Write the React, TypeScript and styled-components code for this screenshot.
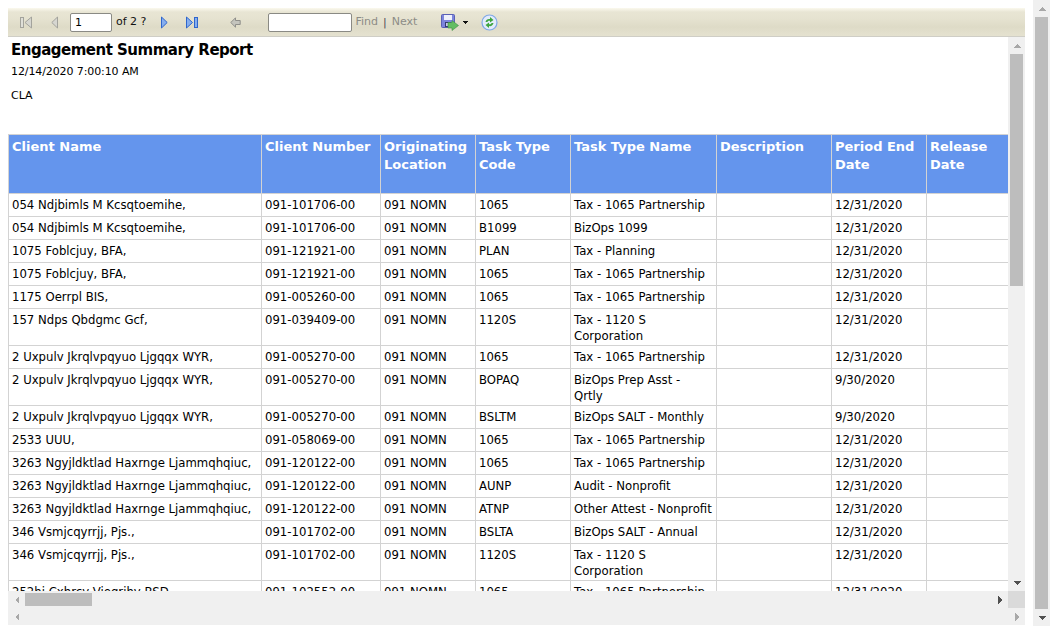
import React from "react";
import styled, { createGlobalStyle } from "styled-components";

const Global = createGlobalStyle`
  html, body { margin: 0; padding: 0; height: 626px; overflow: hidden; background: #fff; }
  body { font-family: "DejaVu Sans", Tahoma, sans-serif; font-size: 11px; color: #000; }
`;

const Page = styled.div`
  display: flex;
  width: 1050px;
  height: 626px;
`;
const Viewer = styled.div`
  flex: 0 0 1017px;
  display: flex;
  flex-direction: column;
  margin: 8px 8px 1px 8px;
  min-width: 0;
`;
const Toolbar = styled.div`
  flex: 0 0 29px;
  display: flex;
  align-items: center;
  padding-left: 10px;
  box-sizing: border-box;
  border-bottom: 1px solid #cfcec6;
  background: linear-gradient(#fbf9ee 0, #e8e5d4 4px, #e6e3d1 10px, #dedbc7 19px, #e4e1cf 27px);
`;
const ToolIcon = styled.svg<{ $ml: number }>`
  display: block;
  flex: none;
  margin-left: ${(p) => p.$ml}px;
`;
const ToolInput = styled.div<{ $w: number; $ml: number }>`
  flex: none;
  box-sizing: border-box;
  width: ${(p) => p.$w}px;
  height: 19px;
  margin-left: ${(p) => p.$ml}px;
  padding: 2px 4px;
  background: #fff;
  border: 1px solid #8a8a84;
  border-radius: 2px;
  line-height: 14px;
`;
const ToolText = styled.span<{ $ml: number; $muted?: boolean }>`
  flex: none;
  margin-left: ${(p) => p.$ml}px;
  color: ${(p) => (p.$muted ? "#8c8c86" : "#111")};
  line-height: 14px;
`;
const Pipe = styled.span`
  flex: none;
  margin-left: 5px;
  color: #4f4a55;
`;

const Middle = styled.div`
  flex: 1;
  display: flex;
  min-height: 0;
`;
const Report = styled.div`
  flex: 1;
  min-width: 0;
  overflow: hidden;
`;
const Title = styled.h1`
  margin: 5px 0 0 3px;
  font-size: 15px;
  letter-spacing: -0.5px;
  line-height: 17px;
  font-weight: 700;
  color: #000;
`;
const DateLine = styled.div`
  margin: 6px 0 0 3px;
  letter-spacing: -0.1px;
  line-height: 14px;
`;
const Org = styled.div`
  margin: 10px 0 31px 3px;
  line-height: 14px;
`;
const Table = styled.table`
  border-collapse: collapse;
  table-layout: fixed;
  width: 1010px;
  font-size: 11.7px;
`;
const Th = styled.th`
  box-sizing: border-box;
  height: 59px;
  padding: 3px 3px 0;
  vertical-align: top;
  text-align: left;
  background: #6495ed;
  color: #fff;
  border: 1px solid #d3d3d3;
  font-size: 13px;
  line-height: 18px;
  font-weight: 700;
`;
const Td = styled.td`
  box-sizing: border-box;
  height: 23px;
  padding: 3px 3px 1px;
  vertical-align: top;
  border: 1px solid #d3d3d3;
  line-height: 16px;
  color: #000;
`;

const VBar = styled.div`
  flex: 0 0 17px;
  display: flex;
  flex-direction: column;
  align-items: center;
  background: #f0f0f0;
`;
const VThumb = styled.div<{ $h?: number }>`
  width: 13px;
  flex: ${(p) => (p.$h ? `0 0 ${p.$h}px` : "1")};
  background: #bdbdbd;
`;
const VSpace = styled.div`
  flex: 1;
`;
const ArrowBox = styled.div`
  flex: 0 0 17px;
  width: 17px;
  height: 17px;
  display: flex;
  align-items: center;
  justify-content: center;
`;
const HBar = styled.div`
  flex: 0 0 17px;
  display: flex;
  align-items: center;
  background: #f0f0f0;
`;
const HThumb = styled.div`
  flex: 0 0 67px;
  height: 13px;
  background: #bdbdbd;
`;
const HSpace = styled.div`
  flex: 1;
`;
const Corner = styled.div`
  flex: 0 0 17px;
  height: 17px;
  background: #dadada;
`;

const Arrow = ({ d, fill }: { d: "u" | "d" | "l" | "r"; fill: string }) => {
  const pts = { u: "4,0 8,4 0,4", d: "0,0 8,0 4,4", l: "4,0 4,8 0,4", r: "0,0 4,4 0,8" }[d];
  const v = d === "u" || d === "d";
  return (
    <svg width={v ? 8 : 4} height={v ? 4 : 8} viewBox={v ? "0 0 8 4" : "0 0 4 8"} shapeRendering="crispEdges">
      <polygon points={pts} fill={fill} />
    </svg>
  );
};

const cols = [253, 119, 95, 95, 146, 115, 95, 92];
const heads = ["Client Name", "Client Number", "Originating Location", "Task Type Code", "Task Type Name", "Description", "Period End Date", "Release Date"];
const P1065 = "Tax - 1065 Partnership";
const C1120 = ["Tax - 1120 S", "Corporation"];
const rows: [string, string, string, string | string[], string][] = [
  ["054 Ndjbimls M Kcsqtoemihe,", "091-101706-00", "1065", P1065, "12/31/2020"],
  ["054 Ndjbimls M Kcsqtoemihe,", "091-101706-00", "B1099", "BizOps 1099", "12/31/2020"],
  ["1075 Foblcjuy, BFA,", "091-121921-00", "PLAN", "Tax - Planning", "12/31/2020"],
  ["1075 Foblcjuy, BFA,", "091-121921-00", "1065", P1065, "12/31/2020"],
  ["1175 Oerrpl BIS,", "091-005260-00", "1065", P1065, "12/31/2020"],
  ["157 Ndps Qbdgmc Gcf,", "091-039409-00", "1120S", C1120, "12/31/2020"],
  ["2 Uxpulv Jkrqlvpqyuo Ljgqqx WYR,", "091-005270-00", "1065", P1065, "12/31/2020"],
  ["2 Uxpulv Jkrqlvpqyuo Ljgqqx WYR,", "091-005270-00", "BOPAQ", ["BizOps Prep Asst -", "Qrtly"], "9/30/2020"],
  ["2 Uxpulv Jkrqlvpqyuo Ljgqqx WYR,", "091-005270-00", "BSLTM", "BizOps SALT - Monthly", "9/30/2020"],
  ["2533 UUU,", "091-058069-00", "1065", P1065, "12/31/2020"],
  ["3263 Ngyjldktlad Haxrnge Ljammqhqiuc,", "091-120122-00", "1065", P1065, "12/31/2020"],
  ["3263 Ngyjldktlad Haxrnge Ljammqhqiuc,", "091-120122-00", "AUNP", "Audit - Nonprofit", "12/31/2020"],
  ["3263 Ngyjldktlad Haxrnge Ljammqhqiuc,", "091-120122-00", "ATNP", "Other Attest - Nonprofit", "12/31/2020"],
  ["346 Vsmjcqyrrjj, Pjs.,", "091-101702-00", "BSLTA", "BizOps SALT - Annual", "12/31/2020"],
  ["346 Vsmjcqyrrjj, Pjs.,", "091-101702-00", "1120S", C1120, "12/31/2020"],
  ["252hi Cxhrcy Viegrihy BSD,", "091-102552-00", "1065", P1065, "12/31/2020"],
];

export default function App() {
  return (
    <Page>
      <Global />
      <Viewer>
        <Toolbar>
          <ToolIcon $ml={2} width="12" height="13" viewBox="0 0 12 13">
            <rect x="0.5" y="1.5" width="3" height="10" fill="#dfdfd8" stroke="#a3a39c" />
            <path d="M11.5 1 L5 6.5 L11.5 12 Z" fill="#d6d6d0" stroke="#a3a39c" />
          </ToolIcon>
          <ToolIcon $ml={19} width="7" height="13" viewBox="0 0 7 13">
            <path d="M6.5 1 L0.8 6.5 L6.5 12 Z" fill="#d6d6d0" stroke="#a3a39c" />
          </ToolIcon>
          <ToolInput $w={42} $ml={12}>1</ToolInput>
          <ToolText $ml={4}>of 2 ?</ToolText>
          <ToolIcon $ml={15} width="7" height="13" viewBox="0 0 7 13">
            <path d="M0.5 1 L6.2 6.5 L0.5 12 Z" fill="#86aeee" stroke="#2f66cc" />
          </ToolIcon>
          <ToolIcon $ml={18} width="12" height="13" viewBox="0 0 12 13">
            <path d="M0.5 1 L6.5 6.5 L0.5 12 Z" fill="#86aeee" stroke="#2f66cc" />
            <rect x="8.5" y="1.5" width="3" height="10" fill="#86aeee" stroke="#2f66cc" />
          </ToolIcon>
          <ToolIcon $ml={32} width="11" height="11" viewBox="0 0 11 11">
            <path d="M5.5 0.8 L0.8 5.5 L5.5 10.2 V7.5 H10.2 V3.5 H5.5 Z" fill="#c4c4bd" stroke="#8f8f8a" />
          </ToolIcon>
          <ToolInput $w={84} $ml={27} />
          <ToolText $ml={3} $muted>Find</ToolText>
          <Pipe>|</Pipe>
          <ToolText $ml={5} $muted>Next</ToolText>
          <ToolIcon $ml={24} width="18" height="17" viewBox="0 0 18 17">
            <rect x="0.5" y="0.5" width="13" height="13" rx="1" fill="#7c84dc" stroke="#5a60b4" />
            <rect x="3" y="1" width="8" height="5" fill="#eef0fb" />
            <rect x="4" y="8" width="6" height="5" fill="#34376e" />
            <rect x="5" y="9" width="2" height="3" fill="#c7cbe8" />
            <path d="M7 8.5 H11 V6.5 L17.5 11.5 L11 16.5 V14 H7 Z" fill="#63bd62" stroke="#3f8f44" strokeWidth="0.6" />
          </ToolIcon>
          <ToolIcon $ml={3} width="6" height="3" viewBox="0 0 6 3" shapeRendering="crispEdges">
            <polygon points="0,0 6,0 3,3" fill="#111" />
          </ToolIcon>
          <ToolIcon $ml={13} width="17" height="17" viewBox="0 0 17 17">
            <circle cx="8.5" cy="8.5" r="7.5" fill="#e3ecfb" stroke="#7fa8e8" strokeWidth="1.2" />
            <path d="M4.5 8 C5 5.5 7 4.5 9 5 V3 L12.5 6 L9 8.5 V6.8 C7.8 6.4 6.8 6.9 6.4 8 Z" fill="#3ea53f" />
            <path d="M12.5 9 C12 11.5 10 12.5 8 12 V14 L4.5 11 L8 8.5 V10.2 C9.2 10.6 10.2 10.1 10.6 9 Z" fill="#3ea53f" />
          </ToolIcon>
        </Toolbar>
        <Middle>
          <Report>
            <Title>Engagement Summary Report</Title>
            <DateLine>12/14/2020 7:00:10 AM</DateLine>
            <Org>CLA</Org>
            <Table>
              <colgroup>
                {cols.map((w, i) => (
                  <col key={i} width={w} />
                ))}
              </colgroup>
              <thead>
                <tr>
                  {heads.map((h) => (
                    <Th key={h}>{h}</Th>
                  ))}
                </tr>
              </thead>
              <tbody>
                {rows.map((r, i) => (
                  <tr key={i}>
                    <Td>{r[0]}</Td>
                    <Td>{r[1]}</Td>
                    <Td>091 NOMN</Td>
                    <Td>{r[2]}</Td>
                    <Td>
                      {Array.isArray(r[3])
                        ? r[3].map((l, j) => (
                            <React.Fragment key={j}>
                              {j > 0 && <br />}
                              {l}
                            </React.Fragment>
                          ))
                        : r[3]}
                    </Td>
                    <Td />
                    <Td>{r[4]}</Td>
                    <Td />
                  </tr>
                ))}
              </tbody>
            </Table>
          </Report>
          <VBar>
            <ArrowBox><Arrow d="u" fill="#a8a8a8" /></ArrowBox>
            <VThumb $h={232} />
            <VSpace />
            <ArrowBox><Arrow d="d" fill="#505050" /></ArrowBox>
          </VBar>
        </Middle>
        <HBar>
          <ArrowBox><Arrow d="l" fill="#a8a8a8" /></ArrowBox>
          <HThumb />
          <HSpace />
          <ArrowBox><Arrow d="r" fill="#505050" /></ArrowBox>
          <Corner />
        </HBar>
        <HBar>
          <ArrowBox><Arrow d="l" fill="#a8a8a8" /></ArrowBox>
          <HSpace />
          <ArrowBox><Arrow d="r" fill="#a8a8a8" /></ArrowBox>
        </HBar>
      </Viewer>
      <VBar>
        <ArrowBox><Arrow d="u" fill="#a8a8a8" /></ArrowBox>
        <VThumb />
        <ArrowBox><Arrow d="d" fill="#505050" /></ArrowBox>
      </VBar>
    </Page>
  );
}
